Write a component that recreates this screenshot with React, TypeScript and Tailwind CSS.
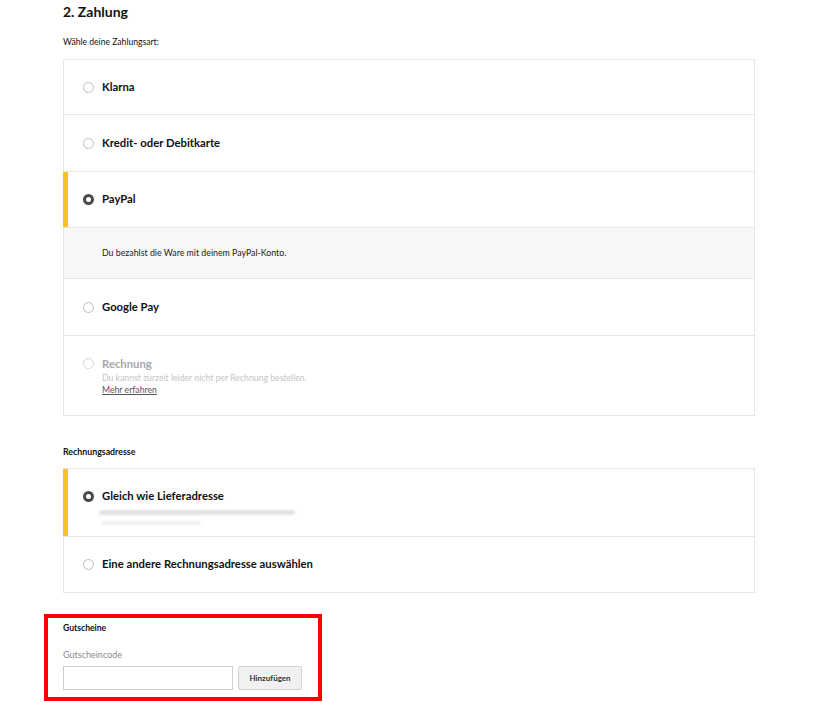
import React from "react";

type Option = {
  label: string;
  selected?: boolean;
  disabled?: boolean;
};

const font = { fontFamily: "Lato, 'Open Sans', Arial, sans-serif" };

function Radio({ checked, disabled }: { checked?: boolean; disabled?: boolean }) {
  if (checked) {
    return <span className="block w-[11px] h-[11px] rounded-full border-[3.5px] border-[#4a4a4a] bg-white shrink-0" />;
  }
  return (
    <span
      className={
        "block w-[11px] h-[11px] rounded-full border bg-white shrink-0 " +
        (disabled ? "border-[#d6d6d6]" : "border-[#bdbdbd]")
      }
    />
  );
}

function YellowBar() {
  return <span className="absolute -left-px top-0 bottom-0 w-[5px] bg-[#f9c31f]" />;
}

function Row({ label, selected, height }: Option & { height: string }) {
  return (
    <div className={"relative flex items-center pl-[19px] gap-2 " + height}>
      {selected && <YellowBar />}
      <Radio checked={selected} />
      <span className="text-[11.3px] font-bold text-[#111]">{label}</span>
    </div>
  );
}

export default function App() {
  return (
    <div className="min-h-[702px] bg-white text-[#111]" style={font}>
      <div className="ml-[63px] w-[692px] pt-[2px]">
        <h2 className="text-[14px] leading-[20px] font-bold">2. Zahlung</h2>
        <p className="mt-[14px] text-[8.6px] leading-[12px]">Wähle deine Zahlungsart:</p>

        <div className="mt-[11px] border border-[#e6e6e6] divide-y divide-[#e6e6e6]">
          <Row label="Klarna" height="h-[55px]" />
          <Row label="Kredit- oder Debitkarte" height="h-[57px]" />
          <Row label="PayPal" selected height="h-[56px]" />
          <div className="h-[51px] bg-[#f7f7f7] flex items-center pl-[38px]">
            <span className="text-[8.8px] text-[#222]">Du bezahlst die Ware mit deinem PayPal-Konto.</span>
          </div>
          <Row label="Google Pay" height="h-[57px]" />
          <div className="h-[79px] flex pl-[19px] gap-2 pt-[21px]">
            <div className="pt-[1px]">
              <Radio disabled />
            </div>
            <div className="flex flex-col">
              <span className="text-[11.3px] leading-[13px] font-bold text-[#a8a8a8]">Rechnung</span>
              <span className="mt-[2px] text-[8.7px] leading-[11px] text-[#c4c4c4]">
                Du kannst zurzeit leider nicht per Rechnung bestellen.
              </span>
              <a className="mt-[1px] text-[8.7px] leading-[11px] text-[#555] underline" href="#">
                Mehr erfahren
              </a>
            </div>
          </div>
        </div>

        <p className="mt-[30px] text-[8.8px] leading-[12px] font-bold">Rechnungsadresse</p>

        <div className="mt-[10px] border border-[#e6e6e6] divide-y divide-[#e6e6e6]">
          <div className="relative h-[68px] pl-[19px] pt-[20px]">
            <YellowBar />
            <div className="flex items-center gap-2">
              <Radio checked />
              <span className="text-[11.3px] leading-[14px] font-bold">Gleich wie Lieferadresse</span>
            </div>
            <div className="mt-[7px] ml-[16px] w-[196px] h-[5px] rounded-full bg-[#e2e2e2] blur-[1px]" />
            <div className="mt-[6px] ml-[18px] w-[100px] h-[4px] rounded-full bg-[#f4f2ee] blur-[1px]" />
          </div>
          <Row label="Eine andere Rechnungsadresse auswählen" height="h-[55px]" />
        </div>
      </div>

      <div className="mt-[21px] ml-[44px] w-[278px] h-[87px] border-4 border-[#ff0000] pl-[15px] pt-[4px]">
        <p className="text-[8.6px] leading-[12px] font-bold">Gutscheine</p>
        <p className="mt-[15px] text-[9px] leading-[12px] text-[#8a8a8a]">Gutscheincode</p>
        <div className="mt-[5px] flex gap-[5px]">
          <input className="w-[170px] h-[24px] border border-[#cfcfcf] bg-white outline-none" />
          <button className="w-[64px] h-[24px] border border-[#d2d2d2] bg-[#f1f1f1] rounded-[2px] text-[8px] font-bold text-[#333]">
            Hinzufügen
          </button>
        </div>
      </div>
    </div>
  );
}
